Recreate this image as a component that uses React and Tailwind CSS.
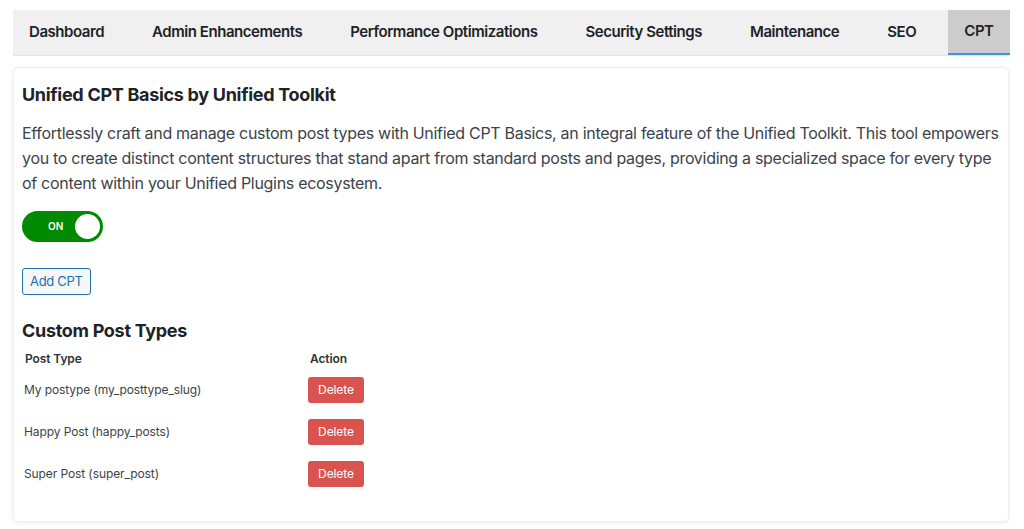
const tabs = [
  "Dashboard",
  "Admin Enhancements",
  "Performance Optimizations",
  "Security Settings",
  "Maintenance",
  "SEO",
  "CPT",
];

const postTypes = [
  { name: "My postype", slug: "my_posttype_slug" },
  { name: "Happy Post", slug: "happy_posts" },
  { name: "Super Post", slug: "super_post" },
];

const App = () => {
  return (
    <div
      className="min-h-[529px] bg-white pt-[10px] pl-[13px] pr-[15px] text-[#3c434a]"
      style={{ fontFamily: "Inter, 'Noto Sans', sans-serif" }}
    >
      {/* tabs */}
      <div className="flex h-[46px] gap-4 bg-[#f0f0f0] border-b border-[#e2e2e2]">
        {tabs.map((tab) => (
          <div
            key={tab}
            className={
              tab === "CPT"
                ? "flex items-center whitespace-nowrap px-4 bg-[#cccccc] border-b-2 border-[#3a9ad9] text-[15px] tracking-[-0.45px] font-semibold text-[#1d2327]"
                : "flex items-center whitespace-nowrap px-4 text-[15px] tracking-[-0.45px] font-semibold text-[#1d2327]"
            }
          >
            {tab}
          </div>
        ))}
      </div>

      {/* card */}
      <div className="mt-[11px] rounded-[5px] bg-white border border-[#f0f0f0] shadow-[0_1px_4px_rgba(0,0,0,0.08)] pt-[15px] pb-[26px] pl-[8px] pr-[2px]">
        <h2 className="text-[18px] leading-[23px] tracking-[-0.3px] font-bold text-[#1d2327]">
          Unified CPT Basics by Unified Toolkit
        </h2>
        <p className="mt-[15px] text-[16px] leading-[25px] tracking-[-0.3px] text-[#3c434a]">
          Effortlessly craft and manage custom post types with Unified CPT Basics, an integral feature of the
          Unified Toolkit. This tool empowers you to create distinct content structures that stand apart from
          standard posts and pages, providing a specialized space for every type of content within your Unified
          Plugins ecosystem.
        </p>

        {/* toggle */}
        <div className="mt-[15px] flex items-center w-[81px] h-[31px] rounded-full bg-[#008a00] pl-[26px] pr-[3px]">
          <span className="text-[10px] font-semibold text-white">ON</span>
          <span className="ml-auto w-[25px] h-[25px] rounded-full bg-white" />
        </div>

        <button className="mt-[26px] h-[27px] px-[7px] rounded-[3px] border border-[#2271b1] bg-[#f6f7f7] text-[13px] tracking-[-0.3px] text-[#2271b1]">
          Add CPT
        </button>

        <h2 className="mt-[24px] text-[18px] leading-[23px] tracking-[-0.3px] font-bold text-[#1d2327]">
          Custom Post Types
        </h2>

        <div className="mt-[7px] grid grid-cols-[284px_1fr] text-[12px] tracking-[-0.1px] text-[#3c434a]">
          <div className="h-[20px] flex items-center px-[3px] font-semibold text-[#2c3338]">Post Type</div>
          <div className="h-[20px] flex items-center px-[4px] font-semibold text-[#2c3338]">Action</div>
          {postTypes.map((pt) => (
            <>
              <div key={pt.slug} className="h-[42px] flex items-center px-[2px]">
                {pt.name} ({pt.slug})
              </div>
              <div key={pt.slug + "-a"} className="h-[42px] flex items-center px-[2px]">
                <button className="h-[26px] w-[56px] rounded-[3px] bg-[#d9534f] text-[12px] text-white">
                  Delete
                </button>
              </div>
            </>
          ))}
        </div>
      </div>
    </div>
  );
};

export default App;
